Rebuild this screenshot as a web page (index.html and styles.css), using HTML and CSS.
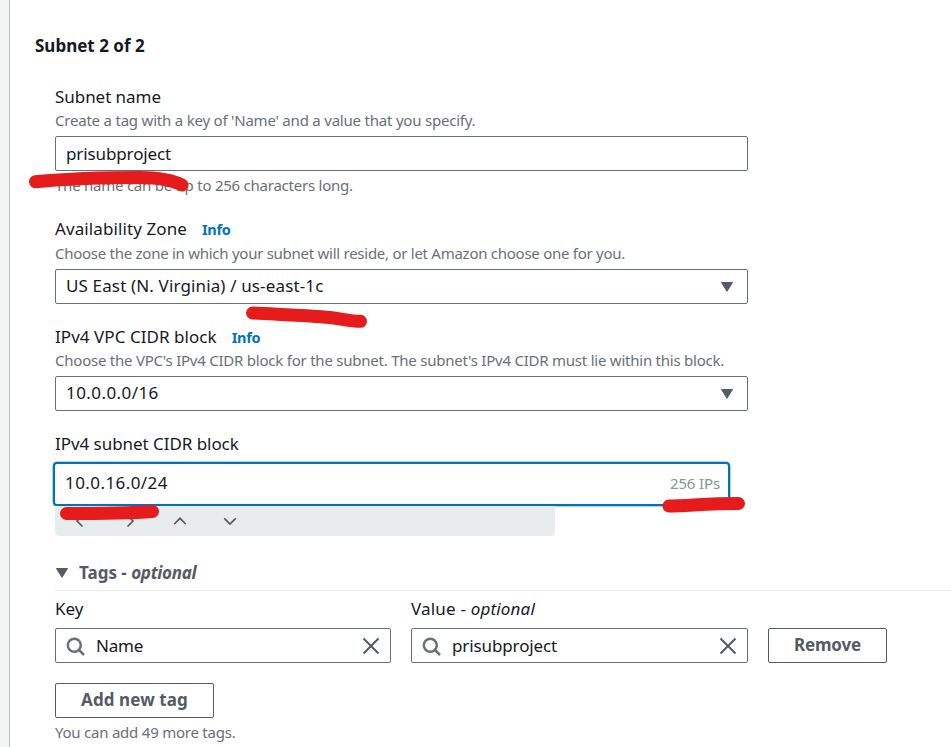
FILE: index.html
```
<!DOCTYPE html>
<html lang="en">
<head>
<meta charset="utf-8">
<title>Create subnet</title>
<link rel="stylesheet" href="styles.css">
</head>
<body>
<main class="panel">
  <h2 class="title">Subnet 2 of 2</h2>

  <section class="form">
    <div class="field name-field">
      <div class="label">Subnet name</div>
      <div class="hint">Create a tag with a key of 'Name' and a value that you specify.</div>
      <div class="input"><span class="project">prisubproject</span></div>
      <div class="hint constraint">The name can be up to 256 characters long.</div>
    </div>

    <div class="field zone-field">
      <div class="label"><span class="zone-label">Availability Zone</span><a class="info">Info</a></div>
      <div class="hint zone-hint">Choose the zone in which your subnet will reside, or let Amazon choose one for you.</div>
      <div class="input select"><span class="zone">US East (N. Virginia) / us-east-1c</span>
        <svg class="caret" viewBox="0 0 14 12"><path d="M1.5 1.5h11L7 10.3z"/></svg></div>
    </div>

    <div class="field vpc-field">
      <div class="label"><span class="vpc-label">IPv4 VPC CIDR block</span><a class="info">Info</a></div>
      <div class="hint">Choose the VPC's IPv4 CIDR block for the subnet. The subnet's IPv4 CIDR must lie within this block.</div>
      <div class="input select"><span class="cidr">10.0.0.0/16</span>
        <svg class="caret" viewBox="0 0 14 12"><path d="M1.5 1.5h11L7 10.3z"/></svg></div>
    </div>

    <div class="field cidr-field">
      <div class="label cidr-label">IPv4 subnet CIDR block</div>
      <div class="focus-input"><span class="cidr">10.0.16.0/24</span><span class="count">256 IPs</span></div>
      <div class="stepper">
        <svg class="chevron" viewBox="0 0 14 14"><path d="M9.5 1.5 4 7l5.5 5.5"/></svg>
        <svg class="chevron" viewBox="0 0 14 14"><path d="M4.5 1.5 10 7l-5.5 5.5"/></svg>
        <svg class="chevron" viewBox="0 0 14 14"><path d="M1.3 10 7 4.3 12.7 10"/></svg>
        <svg class="chevron" viewBox="0 0 14 14"><path d="M1.3 4.3 7 10l5.7-5.7"/></svg>
      </div>
    </div>

    <div class="tags-head">
      <svg class="caret" viewBox="0 0 14 12"><path d="M1.5 1.5h11L7 10.3z"/></svg>
      <span>Tags - <em>optional</em></span>
    </div>

    <div class="tag-row">
      <div class="tag-col">
        <div class="label">Key</div>
        <div class="input search">
          <svg class="glass" viewBox="0 0 20 20"><circle cx="8.3" cy="8.3" r="6.5"/><path d="m13 13 5 5"/></svg>
          <span class="key">Name</span>
          <svg class="close" viewBox="0 0 18 18"><path d="m1.5 1.5 15 15m0-15-15 15"/></svg>
        </div>
      </div>
      <div class="tag-col">
        <div class="label value-label">Value - <em>optional</em></div>
        <div class="input search">
          <svg class="glass" viewBox="0 0 20 20"><circle cx="8.3" cy="8.3" r="6.5"/><path d="m13 13 5 5"/></svg>
          <span class="project">prisubproject</span>
          <svg class="close" viewBox="0 0 18 18"><path d="m1.5 1.5 15 15m0-15-15 15"/></svg>
        </div>
      </div>
      <button class="button remove">Remove</button>
    </div>

    <button class="button add">Add new tag</button>
    <div class="hint">You can add 49 more tags.</div>
  </section>
</main>

<svg class="marker" viewBox="0 0 951 747">
  <path d="M35.5 181.700C70 178.500 105 177.500 140 177.500c20 .2 32 2.500 42 7.500"/>
  <path d="M252.500 313C280 314.500 310 315.500 330 317.500c12 1.300 20 3.800 30.500 3.800"/>
  <path d="M66.500 513.500C95 513.500 125 513.500 152.500 511.500"/>
  <path d="M669 506C690 505.500 710 503.500 738.500 503.500"/>
</svg>
</body>
</html>
```
FILE: styles.css
```
* { box-sizing: border-box; }

body {
  margin: 0;
  height: 747px;
  overflow: hidden;
  background: #f2f3f3;
  color: #16191f;
  font: 17px/22px "Noto Sans", sans-serif;
}

.panel {
  height: 747px;
  margin-left: 9px;
  padding: 35px 0 0 25px;
  border-left: 1px solid #b9bdbe;
  background: #fff;
}

.title {
  margin: 0;
  font-size: 17px;
  line-height: 22px;
  font-weight: 700;
}

.form { padding: 29px 0 0 20px; }

.label { height: 22px; }
.name-field .label,
.cidr-label { letter-spacing: -0.05px; }
.zone-label { letter-spacing: 0.1px; }
.vpc-label { letter-spacing: 0.05px; }

.info {
  margin-left: 15px;
  color: #0073bb;
  font-size: 14.5px;
  font-weight: 700;
  letter-spacing: -0.3px;
}

.hint {
  height: 20px;
  margin-top: 3px;
  color: #687078;
  font-size: 15px;
  line-height: 20px;
  letter-spacing: -0.23px;
  white-space: nowrap;
}

.name-field .hint { margin-top: 2px; letter-spacing: -0.21px; }
.zone-hint { letter-spacing: -0.266px; }

.input {
  display: flex;
  align-items: center;
  width: 693px;
  height: 35px;
  margin-top: 6px;
  padding: 0 13px 0 10px;
  border: 1px solid #687078;
  border-radius: 2px;
  background: #fff;
}

.name-field .constraint { margin-top: 4px; letter-spacing: -0.24px; }

.select { justify-content: space-between; }
.select span { padding-bottom: 2px; }
.project { letter-spacing: -0.12px; }
.zone { letter-spacing: 0.14px; }
.cidr { letter-spacing: 0.42px; }

.zone-field { margin-top: 23px; }
.vpc-field { margin-top: 22px; }
.vpc-field .hint { margin-top: 2px; }
.cidr-field { margin-top: 22px; }

.caret {
  width: 14px;
  height: 12px;
  fill: #545b64;
  stroke: #545b64;
  stroke-width: 1;
  stroke-linejoin: round;
}

.focus-input {
  display: flex;
  align-items: center;
  justify-content: space-between;
  width: 677px;
  height: 44px;
  margin: 7px 0 0 -2px;
  padding: 0 8px 2px 10px;
  border: 2px solid #0073bb;
  border-radius: 4px;
  background: #fff;
  box-shadow: 0 0 0 0.5px #5fa6d3;
}

.count {
  color: #879596;
  font-size: 15px;
  letter-spacing: -0.14px;
}

.stepper {
  display: flex;
  align-items: center;
  gap: 36px;
  width: 500px;
  height: 30px;
  padding-left: 18px;
  border-radius: 0 0 4px 4px;
  background: #e9ecec;
}

.chevron {
  width: 14px;
  height: 14px;
  fill: none;
  stroke: #545b64;
  stroke-width: 1.7;
}

.tags-head {
  display: flex;
  align-items: center;
  gap: 10px;
  height: 35px;
  margin-top: 20px;
  border-bottom: 1px solid #eaeded;
  color: #545b64;
  font-weight: 700;
}

.tags-head em { letter-spacing: -0.3px; }

.tag-row {
  display: flex;
  align-items: flex-end;
  gap: 20px;
  margin-top: 7px;
}

.tag-col .input { width: 336px; margin-top: 8px; padding: 0 10px; }
.tag-col + .tag-col .input { width: 337px; }
.value-label { letter-spacing: 0.18px; }
.key { letter-spacing: -0.2px; }

.glass {
  width: 20px;
  height: 20px;
  margin: 2px 10px 0 0;
  fill: none;
  stroke: #687078;
  stroke-width: 2.5;
}

.close {
  width: 18px;
  height: 18px;
  margin-left: auto;
  fill: none;
  stroke: #545b64;
  stroke-width: 2;
}

.button {
  display: block;
  height: 35px;
  padding: 0 0 1px;
  border: 1px solid #545b64;
  border-radius: 2px;
  background: #fff;
  color: #545b64;
  font: 700 17px/22px "Noto Sans", sans-serif;
}

.remove { width: 119px; letter-spacing: -0.2px; }
.add { width: 159px; margin-top: 20px; letter-spacing: 0.1px; }
.add + .hint { margin-top: 4px; }

.marker {
  position: absolute;
  top: 0;
  left: 0;
  width: 951px;
  height: 747px;
  fill: none;
  stroke: #e61b1b;
  stroke-width: 13;
  stroke-linecap: round;
  pointer-events: none;
}
```
